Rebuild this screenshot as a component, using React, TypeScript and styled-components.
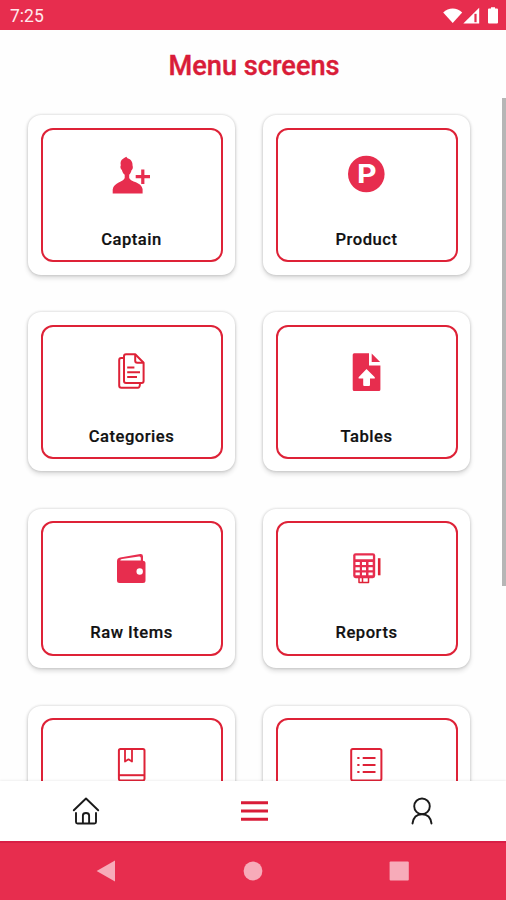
import React from "react";
import styled, { createGlobalStyle } from "styled-components";

const RED = "#e72d4e";
const LINE = "#de2237";

const GlobalStyle = createGlobalStyle`
  * { box-sizing: border-box; }
  body { margin: 0; background: #fff; font-family: Roboto, "Liberation Sans", sans-serif; }
  svg { display: block; }
`;

const Screen = styled.div`
  display: flex;
  flex-direction: column;
  width: 506px;
  height: 900px;
  overflow: hidden;
  background: #fefefe;
`;

const StatusBar = styled.header`
  display: flex;
  align-items: center;
  justify-content: space-between;
  flex: none;
  height: 29.5px;
  padding: 3px 7px 0 10px;
  background: ${RED};
  color: #ffe9ed;
`;

const Clock = styled.span`
  font-size: 17.5px;
  line-height: 20px;
`;

const Title = styled.h1`
  flex: none;
  height: 67.5px;
  margin: 0;
  padding-top: 20.5px;
  padding-left: 2px;
  color: #d91c38;
  font-size: 27.2px;
  font-weight: 500;
  line-height: 32px;
  text-align: center;
  -webkit-text-stroke: 0.4px #d91c38;
`;

const Content = styled.main`
  display: flex;
  justify-content: space-between;
  flex: 1;
  min-height: 0;
  overflow: hidden;
`;

const CardGrid = styled.div`
  display: grid;
  grid-template-columns: 207px 207px;
  grid-auto-rows: 159.3px;
  gap: 37.5px 28px;
  padding: 18.3px 0 0 28px;
`;

const ScrollThumb = styled.div`
  width: 4.5px;
  height: 488px;
  margin-top: 0.5px;
  background: #b6b6b6;
`;

const Card = styled.button`
  display: flex;
  padding: 12.5px;
  border: 0;
  border-radius: 13px;
  background: #fff;
  box-shadow: 0 0 3px rgba(0, 0, 0, 0.2), 0 3px 5px rgba(0, 0, 0, 0.14);
  font-family: inherit;
`;

const CardFrame = styled.div`
  display: flex;
  flex-direction: column;
  align-items: center;
  flex: 1;
  padding-top: 23.5px;
  border: 2px solid ${LINE};
  border-radius: 12px;
`;

const CardLabel = styled.span`
  margin-top: 32.6px;
  color: #111;
  font-size: 16.6px;
  font-weight: 500;
  line-height: 20px;
  letter-spacing: 0.5px;
  -webkit-text-stroke: 0.2px #111;
`;

const TabBar = styled.nav`
  display: grid;
  grid-template-columns: repeat(3, 1fr);
  align-items: center;
  justify-items: center;
  flex: none;
  height: 60px;
  padding-left: 2px;
  background: #fff;
  box-shadow: 0 -1px 2px rgba(0, 0, 0, 0.06);
  z-index: 1;
`;

const Tab = styled.button`
  padding: 0;
  border: 0;
  background: none;
`;

const SystemBar = styled.footer`
  display: flex;
  align-items: center;
  justify-content: space-between;
  flex: none;
  height: 59px;
  padding: 0 97px 1px 96px;
  border-top: 2px solid #d91f46;
  background: ${RED};
`;

const StatusIcons = () => (
  <svg width="56" height="18" viewBox="0 0 56 18" fill="#fff">
    <path d="M.2 5.5C5.5.2 13.8.2 19.2 5.5L9.7 16.1Z" />
    <path d="M20.3 16.6 36.2.7V16.6Z" />
    <path d="M31.4 6.8h2.2v8.4h-2.2z" fill={RED} />
    <path d="M46 1.5h2V.2h4v1.3h2q1 0 1 1v13.1q0 1-1 1h-8q-1 0-1-1V2.5q0-1 1-1Z" />
  </svg>
);

const Icon = ({ children }: { children: React.ReactNode }) => (
  <svg width="45" height="44" viewBox="0 0 45 44" fill="none" stroke={LINE} strokeWidth="2" strokeLinejoin="round">
    {children}
  </svg>
);

const CaptainIcon = () => (
  <Icon>
    <path
      d="M17.3 3.8 18.5 5.2C22 6.2 23.8 9 23.5 12.3 24.4 14.8 23.5 16.5 22.5 17.3 22.1 19.5 21 20.8 20.2 21.7V25C21.3 29.1 32.5 28.8 33.6 36V40.5H3.7V36.5C4.7 29.2 14.7 29.1 15.7 25V21.7C14 20.4 13.3 18.6 12.9 17 11.4 15.7 11 13.6 11.8 12.2 10.8 7.2 13.8 5.9 17.3 3.8Z"
      fill={RED}
      stroke="none"
    />
    <path d="M26.7 23.7H41M33.8 16.4V31" stroke={RED} strokeWidth="3.2" />
  </Icon>
);

const PLetter = styled.text`
  fill: #fff;
  font: 700 25.5px Inter, sans-serif;
`;

const ProductIcon = () => (
  <Icon>
    <circle cx="22.3" cy="21" r="18.3" fill={RED} stroke="none" />
    <PLetter x="13" y="30" textLength="19.6" lengthAdjust="spacingAndGlyphs" stroke="none">P</PLetter>
  </Icon>
);

const CategoriesIcon = () => (
  <Icon>
    <path d="M14.5 8H12.2Q10.2 8 10.2 10V35.6Q10.2 37.8 12.4 37.8H28.8Q30.8 37.8 31 33.5" />
    <path d="M17 4.2H26.2L34.6 12.8V31Q34.6 33 32.6 33H17Q15 33 15 31V6.2Q15 4.2 17 4.2Z" />
    <path d="M26.2 4.2V10.8Q26.2 12.8 28.2 12.8H34.6" />
    <path d="M18.2 17.5H25.4M18.2 22.2H31M18.2 27H28" />
  </Icon>
);

const TablesIcon = () => (
  <Icon>
    <path
      d="M10.2 3.2H25V15.4H36.4V39.4Q36.4 40.9 34.9 40.9H10.2Q8.7 40.9 8.7 39.4V4.7Q8.7 3.2 10.2 3.2ZM27.7 3.6 36.1 12H27.7Z"
      fill={RED}
      stroke="none"
    />
    <path d="M22.5 19 30.8 27.2V28.4H26V35Q26 36 25 36H20.2Q19.2 36 19.2 35V28.4H14.6V27.2Z" fill="#fff" stroke="none" />
  </Icon>
);

const WalletIcon = () => (
  <Icon>
    <path d="M10.4 13.6Q8 13.4 8 15.8V33.5Q8 36 10.5 36H34Q36.5 36 36.5 33.5V16.2Q36.5 13.7 34 13.7V9.5Q34 6.8 31.2 7.1L11.2 10.6Q8 11.3 8 14.2V16Z" fill={RED} stroke="none" />
    <path d="M11.3 13.5Q11.2 12.3 13 12L30 9.5Q31.8 9.2 31.8 11V13.5Z" fill="#fff" stroke="none" />
    <circle cx="30.7" cy="24.5" r="3.2" fill="#fff" stroke="none" />
  </Icon>
);

const ReportsIcon = () => (
  <Icon>
    <rect x="9.2" y="6.2" width="22" height="25" rx="2.4" fill={RED} stroke="none" />
    <path d="M11.5 8.5h17.4v3.7H11.5zM11.5 15h4.3v3h-4.3zM18 15h4v3h-4zM24.5 15h4.2v3h-4.2zM11.5 20.2h4.3v3h-4.3zM18 20.2h4v3h-4zM24.5 20.2h4.2v3h-4.2zM11.5 25.4h4.3v2.8h-4.3zM18 25.4h4v2.8h-4zM24.5 25.4h4.2v2.8h-4.2z" fill="#fff" stroke="none" />
    <path d="M15 31V35.5H24.5V31M18.5 31V35.5" strokeWidth="1.5" />
    <path d="M35.2 11.2V28.3" strokeWidth="2.6" />
  </Icon>
);

const BookIcon = () => (
  <Icon>
    <rect x="9.9" y="5" width="25.6" height="31.4" rx="1.6" />
    <path d="M10 31.2H35.5" />
    <path d="M16 5V17.5L19.5 15.3 23 17.5V5" strokeWidth="1.8" />
  </Icon>
);

const ListIcon = () => (
  <Icon>
    <rect x="7.2" y="5" width="30.2" height="31.4" rx="1.6" />
    <path d="M13.3 14H15.5M18.7 14H31.5M13.3 21H15.5M18.7 21H31.5M13.3 28H15.5M18.7 28H31.5" />
  </Icon>
);

const HomeIcon = () => (
  <svg width="28" height="28" viewBox="0 0 28 28" fill="none" stroke="#1a1a1a" strokeWidth="1.9" strokeLinecap="round" strokeLinejoin="round">
    <path d="M1.8 13.3 14 1.5 26.2 13.3" />
    <path d="M4 16V25Q4 26.5 5.5 26.5H22.5Q24 26.5 24 25V16" />
    <path d="M10.9 26V18.5Q10.9 16 14 16T17.1 18.5V26" />
  </svg>
);

const MenuIcon = () => (
  <svg width="27" height="20" viewBox="0 0 27 20" stroke="#d91c38" strokeWidth="2.9">
    <path d="M0 1.7H27M0 10H27M0 18.3H27" />
  </svg>
);

const ProfileIcon = () => (
  <svg width="24" height="28" viewBox="0 0 24 28" fill="none" stroke="#1a1a1a" strokeWidth="1.9" strokeLinecap="round">
    <circle cx="12" cy="9.3" r="7.8" />
    <path d="M2.5 26.5C3.3 20.5 7 17.3 12 17.3S20.7 20.5 21.5 26.5" />
  </svg>
);

const SystemIcon = ({ children, width }: { children: React.ReactNode; width: number }) => (
  <svg width={width} height="22" viewBox={`0 0 ${width} 22`} fill="#f7abb9">
    {children}
  </svg>
);

const items = [
  { label: "Captain", Glyph: CaptainIcon },
  { label: "Product", Glyph: ProductIcon },
  { label: "Categories", Glyph: CategoriesIcon },
  { label: "Tables", Glyph: TablesIcon },
  { label: "Raw Items", Glyph: WalletIcon },
  { label: "Reports", Glyph: ReportsIcon },
  { label: "", Glyph: BookIcon },
  { label: "", Glyph: ListIcon },
];

export default function App() {
  return (
    <Screen>
      <GlobalStyle />
      <StatusBar>
        <Clock>7:25</Clock>
        <StatusIcons />
      </StatusBar>
      <Title>Menu screens</Title>
      <Content>
        <CardGrid>
          {items.map(({ label, Glyph }, i) => (
            <Card key={i}>
              <CardFrame>
                <Glyph />
                <CardLabel>{label}</CardLabel>
              </CardFrame>
            </Card>
          ))}
        </CardGrid>
        <ScrollThumb />
      </Content>
      <TabBar>
        <Tab><HomeIcon /></Tab>
        <Tab><MenuIcon /></Tab>
        <Tab><ProfileIcon /></Tab>
      </TabBar>
      <SystemBar>
        <SystemIcon width={20}><path d="M.6 11 19 .5V21.5Z" /></SystemIcon>
        <SystemIcon width={20}><circle cx="10" cy="11" r="9.4" /></SystemIcon>
        <SystemIcon width={20}><rect x=".6" y="1.4" width="19.2" height="19.2" rx="1" /></SystemIcon>
      </SystemBar>
    </Screen>
  );
}
